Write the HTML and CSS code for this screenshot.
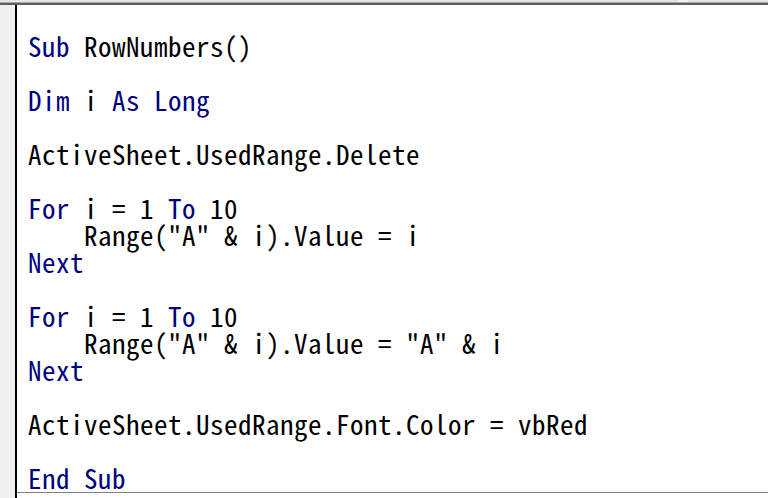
FILE: index.html
```html
<!DOCTYPE html>
<html>
<head>
<meta charset="utf-8">
<link rel="stylesheet" href="styles.css">
</head>
<body>
<div class="topbar"><span class="notch"></span></div>
<div class="editor">
  <div class="gutter"></div>
  <div class="pane">
    <pre class="code"><span class="kw">Sub</span> RowNumbers()

<span class="kw">Dim</span> i <span class="kw">As</span> <span class="kw">Long</span>

ActiveSheet.UsedRange.Delete

<span class="kw">For</span> i = 1 <span class="kw">To</span> 10
    Range("A" &amp; i).Value = i
<span class="kw">Next</span>

<span class="kw">For</span> i = 1 <span class="kw">To</span> 10
    Range("A" &amp; i).Value = "A" &amp; i
<span class="kw">Next</span>

ActiveSheet.UsedRange.Font.Color = vbRed

<span class="kw">End</span> <span class="kw">Sub</span></pre>
    <div class="bottomline"></div>
  </div>
</div>
</body>
</html>
```
FILE: styles.css
```css
html, body {
  margin: 0;
  padding: 0;
  background: #ffffff;
  width: 768px;
  height: 498px;
  overflow: hidden;
}
.topbar {
  position: relative;
  height: 2px;
  background: #e4e4e4;
  border-bottom: 1px solid #a8a8a8;
  box-shadow: 0 2px 0 #5f5f5f;
  margin-bottom: 2px;
}
.notch {
  position: absolute;
  left: 678px;
  top: 0;
  width: 10px;
  height: 2px;
  background: #f4f4f4;
}
.editor {
  display: flex;
  height: 493px;
}
.gutter {
  flex: none;
  width: 15px;
  background: #f0f0f0;
  border-right: 2px solid #000000;
}
.pane {
  flex: 1;
  display: flex;
  flex-direction: column;
}
.code {
  flex: none;
  margin: 0;
  padding: 27px 0 0 11px;
  height: 487px;
  box-sizing: border-box;
  font-family: "Noto Sans Mono CJK KR", "DejaVu Sans Mono", monospace;
  font-size: 27px;
  letter-spacing: 0.5px;
  line-height: 27px;
  color: #000000;
  white-space: pre;
}
.bottomline {
  flex: none;
  height: 1px;
  background: #808080;
}
.kw {
  color: #000080;
}
```
